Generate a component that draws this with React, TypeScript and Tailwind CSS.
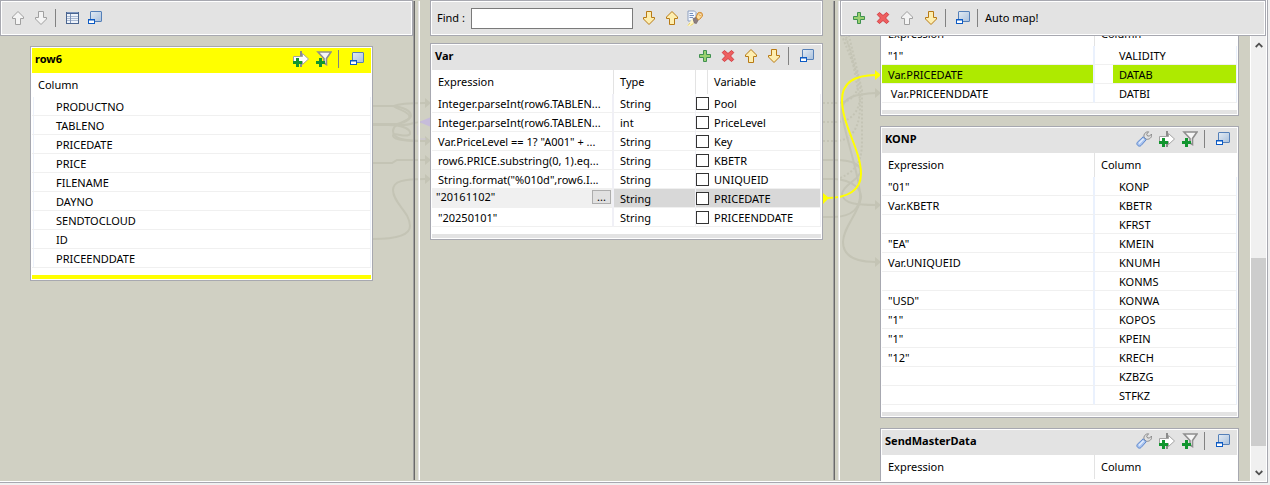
import React from 'react';

type IconProps = { tone?: 'gold' | 'gray' };

const ArrowUp = ({ tone = 'gold' }: IconProps) => (
  <svg viewBox="0 0 16 16" className="size-4" aria-hidden="true">
    <path
      d="M8 1.5 L13.5 7 V8.5 H10.5 V14.5 H5.5 V8.5 H2.5 V7 Z"
      fill={tone === 'gold' ? '#fdeeb0' : '#f4f4f4'}
      stroke={tone === 'gold' ? '#b87a14' : '#a0a0a0'}
      strokeLinejoin="round"
    />
  </svg>
);

const ArrowDown = ({ tone = 'gold' }: IconProps) => (
  <svg viewBox="0 0 16 16" className="size-4" aria-hidden="true">
    <path
      d="M8 14.5 L13.5 9 V7.5 H10.5 V1.5 H5.5 V7.5 H2.5 V9 Z"
      fill={tone === 'gold' ? '#fdeeb0' : '#f4f4f4'}
      stroke={tone === 'gold' ? '#b87a14' : '#a0a0a0'}
      strokeLinejoin="round"
    />
  </svg>
);

const TableIcon = () => (
  <svg viewBox="0 0 16 16" className="size-4" aria-hidden="true" shapeRendering="crispEdges">
    <rect x="2" y="2" width="13" height="12" fill="#4a6590" />
    <rect x="3" y="4" width="11" height="9" fill="#eef3fa" />
    <path d="M3 6.5H14M3 8.5H14M3 10.5H14" stroke="#a9b9d2" />
    <path d="M6.5 4V13" stroke="#7d93b8" />
    <path d="M3 2.5H14" stroke="#7f97bf" />
  </svg>
);

const RestoreIcon = () => (
  <svg viewBox="0 0 16 16" className="size-4" aria-hidden="true">
    <defs>
      <linearGradient id="pane" x1="0" y1="0" x2="1" y2="1">
        <stop offset="0" stopColor="#e4ecf4" />
        <stop offset="1" stopColor="#a9c0dc" />
      </linearGradient>
    </defs>
    <rect x="3.5" y="1.5" width="11" height="10" rx="0.5" fill="url(#pane)" stroke="#5580b8" />
    <rect x="1.5" y="9.5" width="6" height="4" fill="#fff" stroke="#0d5bc4" />
    <path d="M1 10H8" stroke="#0d5bc4" />
  </svg>
);

const PlusIcon = () => (
  <svg viewBox="0 0 16 16" className="size-4" aria-hidden="true">
    <path
      d="M6.5 2.5H9.5V6.5H13.5V9.5H9.5V13.5H6.5V9.5H2.5V6.5H6.5Z"
      fill="#9bd070"
      stroke="#3f9150"
      strokeLinejoin="round"
    />
  </svg>
);

const DeleteIcon = () => (
  <svg viewBox="0 0 16 16" className="size-4" aria-hidden="true">
    <path
      d="M4.5 2.5 L8 5.5 L11.5 2.5 L13.8 4.5 L10.5 8 L13.8 11.5 L11.5 13.5 L8 10.5 L4.5 13.5 L2.2 11.5 L5.5 8 L2.2 4.5Z"
      fill="#ee5f5f"
      stroke="#d33f45"
      strokeLinejoin="round"
    />
  </svg>
);

const InsertIcon = () => (
  <svg viewBox="0 0 16 16" className="size-4" aria-hidden="true">
    <path d="M8 0V16" stroke="#8c8c8c" strokeWidth="2" />
    <path d="M0.5 5.5H9.5V2.5L15.5 8L9.5 13.5V10.5H0.5Z" fill="#fff" stroke="#a3a3a3" />
    <path d="M3 7H6V10H9V13H6V16H3V13H0V10H3Z" fill="#12962f" />
  </svg>
);

const FilterIcon = () => (
  <svg viewBox="0 0 16 16" className="size-4" aria-hidden="true">
    <path d="M2 1H15L10.5 7.5V13.5L8 12V7.5Z" fill="#f6f6f6" stroke="#8f8f8f" strokeWidth="1.6" />
    <path d="M3 7H6V10H9V13H6V16H3V13H0V10H3Z" fill="#12962f" />
  </svg>
);

const WrenchIcon = () => (
  <svg viewBox="0 0 16 16" className="size-4" aria-hidden="true">
    <path
      d="M8 6.2C7.4 3.2 9.4 0.6 12.6 0.8L10.6 3.2L11.6 5L13.6 5L15.5 3C16.300 6.400 13.4 8.800 10.2 8.2Z"
      fill="#e2e2e2"
      stroke="#8a8a8a"
      strokeLinejoin="round"
    />
    <path
      d="M7.2 5.8L10.2 8.8L5 14.6C3.2 16.2 -0.2 14 1.2 11.4Z"
      fill="#a9c4f0"
      stroke="#5c86cc"
      strokeLinejoin="round"
    />
    <path d="M3 12.4L7.600 7.800" stroke="#e4eefc" strokeWidth="1.4" />
  </svg>
);

const HighlightIcon = () => (
  <svg viewBox="0 0 16 16" className="size-4" aria-hidden="true">
    <path d="M1 1H7.5L9 2.5V11H1Z" fill="#f4f8fe" stroke="#8497bb" strokeWidth="0.9" />
    <path d="M2.5 3.5H6M2.5 5.5H7M2.5 7.5H6" stroke="#6683b8" strokeWidth="0.9" />
    <path d="M5 9L8 12.5L4 16H0.5Z" fill="#fff7c8" />
    <path d="M1 15.5L3 13M3.500 15.500L6.500 13.5" stroke="#e8cf62" />
    <path d="M6 8.5L9 7.500L11.2 10L9.400 13.500L7.200 13Z" fill="#8d7f80" stroke="#6a5d62" strokeWidth="0.6" />
    <path
      d="M9 7L11 3C12.5 1.8 15.400 2.4 15.6 4.6C15.700 6.800 12.700 9.400 11.2 10Z"
      fill="#fbdc9a"
      stroke="#cf8426"
    />
    <circle cx="13.200" cy="4.6" r="1" fill="#fff" stroke="#cf8426" strokeWidth="0.6" />
  </svg>
);

const IconButton = ({ label, children }: { label: string; children: React.ReactNode }) => (
  <button type="button" aria-label={label} className="block size-4 shrink-0">
    {children}
  </button>
);

const Divider = () => <span className="h-[18px] w-px shrink-0 bg-[#828282]" />;

const Toolbar = ({ children, className = '' }: { children: React.ReactNode; className?: string }) => (
  <div className={`relative h-9 shrink-0 border border-[#a7a8b0] bg-white p-px ${className}`}>
    <div className="flex h-full items-center bg-[#e3e3e3]">{children}</div>
  </div>
);

const Sash = () => (
  <div className="relative flex pb-px pt-px">
    <span className="w-px bg-[#a0a0a0]" />
    <span className="w-px bg-[#696969]" />
    <span className="w-[3px]" />
    <span className="w-px bg-[#e3e3e3]" />
    <span className="w-px bg-white" />
  </div>
);

const Card = ({
  title,
  tools,
  active = false,
  className = '',
  children,
}: {
  title?: string;
  tools?: React.ReactNode;
  active?: boolean;
  className?: string;
  children: React.ReactNode;
}) => (
  <section className={`relative shrink-0 border border-[#a7a8b0] bg-white p-px ${className}`}>
    <header className={`flex h-[25px] items-start pl-[3px] pr-[6px] ${active ? 'bg-[#ffff00]' : 'bg-[#e3e3e3]'}`}>
      {title && <h2 className="flex-1 text-[11px] font-bold leading-[22px]">{title}</h2>}
      <div className="flex items-center pt-[2px]">{tools}</div>
    </header>
    {children}
    <div className={`mt-[7px] h-1 ${active ? 'bg-[#ffff00]' : 'bg-[#e3e3e3]'}`} />
  </section>
);

const TableTools = ({ settings = false }: { settings?: boolean }) => (
  <>
    <div className="mr-[6px] flex gap-[7px]">
      {settings && (
        <IconButton label="Settings">
          <WrenchIcon />
        </IconButton>
      )}
      <IconButton label="Add mapping">
        <InsertIcon />
      </IconButton>
      <IconButton label="Add filter">
        <FilterIcon />
      </IconButton>
    </div>
    <Divider />
    <div className="ml-[10px]">
      <IconButton label="Minimize">
        <RestoreIcon />
      </IconButton>
    </div>
  </>
);

const headCell = 'h-6 p-0 text-left font-normal';
const cellBox = 'h-[19px] border-b border-[#f0f0f0] p-0';
const cell = `${cellBox} overflow-hidden whitespace-pre`;
const cellText = 'h-[18px] pt-[2px] leading-4';

const inputColumns = [
  'PRODUCTNO',
  'TABLENO',
  'PRICEDATE',
  'PRICE',
  'FILENAME',
  'DAYNO',
  'SENDTOCLOUD',
  'ID',
  'PRICEENDDATE',
];

const InputTable = () => (
  <table className="w-full table-fixed border-separate border-spacing-0">
    <thead>
      <tr>
        <th className={`${headCell} pl-[6px]`}>Column</th>
      </tr>
    </thead>
    <tbody>
      {inputColumns.map((name) => (
        <tr key={name}>
          <td className={cell}>
            <div className={`${cellText} ml-px border-x border-[#edf2fb] pl-[22px]`}>{name}</div>
          </td>
        </tr>
      ))}
    </tbody>
  </table>
);

const variables = [
  { expression: 'Integer.parseInt(row6.TABLEN...', type: 'String', name: 'Pool' },
  { expression: 'Integer.parseInt(row6.TABLEN...', type: 'int', name: 'PriceLevel' },
  { expression: 'Var.PriceLevel == 1? "A001" + ...', type: 'String', name: 'Key' },
  { expression: 'row6.PRICE.substring(0, 1).eq...', type: 'String', name: 'KBETR' },
  { expression: 'String.format("%010d",row6.I...', type: 'String', name: 'UNIQUEID' },
  { expression: '"20161102"', type: 'String', name: 'PRICEDATE', selected: true },
  { expression: '"20250101"', type: 'String', name: 'PRICEENDDATE' },
];

const VarTable = () => (
  <table className="w-full table-fixed border-separate border-spacing-0">
    <colgroup>
      <col />
      <col className="w-[82px]" />
      <col className="w-[12px]" />
      <col className="w-[113px]" />
    </colgroup>
    <thead>
      <tr>
        <th className={`${headCell} border-r border-[#e3e3e3] pl-[6px]`}>Expression</th>
        <th className={`${headCell} border-r border-[#e3e3e3] pl-[6px]`}>Type</th>
        <th className={`${headCell} border-r border-[#e3e3e3]`} aria-label="Nullable" />
        <th className={`${headCell} pl-[6px]`}>Variable</th>
      </tr>
    </thead>
    <tbody>
      {variables.map((v) => (
        <tr key={v.name} className={v.selected ? 'bg-[#d8d8d8]' : ''}>
          {v.selected ? (
            <td className={`${cell} border-r-2 border-r-[#f0f0f6] bg-[#f0f0f0]`}>
              <div className="flex h-[18px] items-start pl-1 pr-px">
                <input
                  aria-label="PRICEDATE expression"
                  defaultValue={v.expression}
                  className="h-4 w-0 flex-1 bg-transparent p-0 leading-4 outline-none"
                />
                <button
                  type="button"
                  aria-label="Open expression editor"
                  className="mt-px h-[14px] w-[19px] border border-[#adadad] bg-[#e1e1e1] leading-[10px]"
                >
                  ...
                </button>
              </div>
            </td>
          ) : (
            <td className={`${cell} border-r-2 border-r-[#f0f0f6]`}>
              <div className={`${cellText} pl-[6px]`}>{v.expression}</div>
            </td>
          )}
          <td className={`${cell} border-r border-r-[#f0f0f6]`}>
            <div className={`${cellText} pl-[6px]`}>{v.type}</div>
          </td>
          <td className={cellBox}>
            <div className="h-[18px] pt-[3px]">
              <input
                type="checkbox"
                aria-label={`${v.name} nullable`}
                className="relative block size-[13px] appearance-none border border-[#333] bg-white checked:bg-[#333]"
              />
            </div>
          </td>
          <td className={`${cell} border-r border-r-[#f0f0f6]`}>
            <div className={`${cellText} pl-[6px]`}>{v.name}</div>
          </td>
        </tr>
      ))}
    </tbody>
  </table>
);

type OutputRow = { expression: string; column: string; linked?: boolean };

const validityRows: OutputRow[] = [
  { expression: '"1"', column: 'VALIDITY' },
  { expression: 'Var.PRICEDATE', column: 'DATAB', linked: true },
  { expression: ' Var.PRICEENDDATE', column: 'DATBI' },
];

const konpRows: OutputRow[] = [
  { expression: '"01"', column: 'KONP' },
  { expression: 'Var.KBETR', column: 'KBETR' },
  { expression: '', column: 'KFRST' },
  { expression: '"EA"', column: 'KMEIN' },
  { expression: 'Var.UNIQUEID', column: 'KNUMH' },
  { expression: '', column: 'KONMS' },
  { expression: '"USD"', column: 'KONWA' },
  { expression: '"1"', column: 'KOPOS' },
  { expression: '"1"', column: 'KPEIN' },
  { expression: '"12"', column: 'KRECH' },
  { expression: '', column: 'KZBZG' },
  { expression: '', column: 'STFKZ' },
];

const OutputTable = ({ rows }: { rows: OutputRow[] }) => (
  <table className="w-full table-fixed border-separate border-spacing-0">
    <colgroup>
      <col className="w-3/5" />
      <col />
    </colgroup>
    <thead>
      <tr>
        <th className={`${headCell} border-r border-[#e3e3e3] pl-[6px]`}>Expression</th>
        <th className={`${headCell} pl-[6px]`}>Column</th>
      </tr>
    </thead>
    <tbody>
      {rows.map((r) => (
        <tr key={r.column}>
          <td className={`${cell} border-r-2 border-r-[#eaf1fd]`}>
            <div className={`${cellText} pl-[6px] ${r.linked ? 'bg-[#aeea00]' : ''}`}>{r.expression}</div>
          </td>
          <td className={`${cell} border-r border-r-[#eaf1fd] pl-[18px]`}>
            <div className={`${cellText} pl-[6px] ${r.linked ? 'bg-[#aeea00]' : ''}`}>{r.column}</div>
          </td>
        </tr>
      ))}
    </tbody>
  </table>
);

const Connectors = () => (
  <svg
    className="pointer-events-none absolute left-0 top-0 h-[481px] w-full"
    viewBox="0 0 1266 481"
    preserveAspectRatio="none"
    aria-hidden="true"
  >
    <g fill="none" stroke="#c4c4b5" strokeWidth="2">
      <path d="M373 106H392C404 107 411 111 411 116C410 122 393 122 393 131C393 139 404 141 425 141" />
      <path d="M373 124H392C406 124 411 119 409 115C405 110 394 108 394 106C398 104 410 103 425 103" />
      <path d="M373 125H400C416 125 408 122 425 122" />
      <path d="M373 125H388C405 125 411 130 410 134C407 139 393 131 393 136C394 140 406 141 425 141" />
      <path d="M373 163H392L397 160H425" />
      <path d="M373 239C400 239 410 234 410 226C410 212 393 203 393 190C393 181 404 179 425 179" />
      <path d="M823 160H835C855 160 862 166 860 173C857 181 843 185 842 194C843 204 858 205 876 205" />
      <path d="M823 179H835C852 180 862 189 861 198C858 214 843 228 843 242C843 257 856 262 876 262" />
      <path d="M823 217H833C852 217 861 208 860 193C857 165 842 128 842 110C842 97 856 94 876 93" />
    </g>
    <g fill="none" stroke="#c4c4b5" strokeWidth="2" strokeDasharray="2 2">
      <path d="M823 103H835C856 103 860 88 858 76L842 36" />
      <path d="M823 122H835C856 122 862 105 860 86L846 36" />
      <path d="M823 141H835C856 141 861 120 860 100L850 48L844 36" />
      <path d="M840 178C858 170 862 160 862 140V90L849 36" />
    </g>
    <g fill="#c4c4b5">
      <path d="M425 98L431 103L425 108Z" />
      <path d="M425 136L431 141L425 146Z" />
      <path d="M425 155L431 160L425 165Z" />
      <path d="M425 174L431 179L425 184Z" />
      <path d="M875 88L881 93L875 98Z" />
      <path d="M875 200L881 205L875 210Z" />
      <path d="M875 257L881 262L875 267Z" />
    </g>
    <path d="M431 117V127L419 122Z" fill="#c6bcda" />
    <path d="M418 126V135M420 139H426" stroke="#c9c2d2" fill="none" />
    <path
      d="M827 198C848 198 861 190 861 174C861 150 842 125 842 100C842 82 856 75 876 75"
      fill="none"
      stroke="#ffff00"
      strokeWidth="2"
    />
    <path d="M823 193L829 198L823 204Z" fill="#ffff00" />
    <path d="M875 70L881 75L875 80Z" fill="#ffff00" />
  </svg>
);

const ScrollBar = () => (
  <div className="flex w-4 shrink-0 flex-col border-l border-white bg-[#f0f0f0]">
    <button type="button" aria-label="Scroll up" className="flex h-[17px] items-center justify-center">
      <svg viewBox="0 0 8 6" className="h-[6px] w-2" aria-hidden="true">
        <path d="M0.7 5L4 1.700L7.3 5" fill="none" stroke="#505050" strokeWidth="1.8" />
      </svg>
    </button>
    <div className="flex flex-1 flex-col">
      <div className="flex-[205]" />
      <div className="flex-[188] bg-[#cdcdcd]" />
      <div className="flex-[18]" />
    </div>
    <button type="button" aria-label="Scroll down" className="flex h-[17px] items-center justify-center">
      <svg viewBox="0 0 8 6" className="h-[6px] w-2" aria-hidden="true">
        <path d="M0.7 1L4 4.300L7.3 1" fill="none" stroke="#505050" strokeWidth="1.8" />
      </svg>
    </button>
  </div>
);

export default function App() {
  return (
    <main className="flex h-screen flex-col bg-[#f0f0f0] pb-[2px] pr-[2px] font-['Noto_Sans','Open_Sans',sans-serif] text-[11px] text-black">
      <div className="flex min-h-0 flex-1 flex-col border-b border-r border-[#a7a8b0] bg-white pb-px pr-px">
        <div className="relative grid min-h-0 flex-1 grid-cols-[413fr_7px_413fr_7px_426fr] grid-rows-[minmax(0,1fr)] overflow-hidden bg-[#d0d0c3]">
          <Connectors />

          <div className="relative flex min-w-0 flex-col">
            <Toolbar>
              <div className="flex items-center pl-2">
                <div className="mr-[6px] flex gap-[7px]">
                  <IconButton label="Move up">
                    <ArrowUp tone="gray" />
                  </IconButton>
                  <IconButton label="Move down">
                    <ArrowDown tone="gray" />
                  </IconButton>
                </div>
                <Divider />
                <div className="ml-2 flex gap-[7px]">
                  <IconButton label="Table view">
                    <TableIcon />
                  </IconButton>
                  <IconButton label="Minimize">
                    <RestoreIcon />
                  </IconButton>
                </div>
              </div>
            </Toolbar>
            <Card title="row6" active tools={<TableTools />} className="ml-[30px] mr-10 mt-[10px]">
              <InputTable />
            </Card>
          </div>

          <Sash />

          <div className="relative flex min-w-0 flex-col px-[10px]">
            <Toolbar>
              <label htmlFor="find" className="box-content w-[34px] whitespace-nowrap pl-[5px]">
                Find :
              </label>
              <input
                id="find"
                type="text"
                className="h-[21px] w-[162px] border border-[#7a7a7a] bg-white px-1 outline-none"
              />
              <div className="ml-2 flex gap-[7px]">
                <IconButton label="Find next">
                  <ArrowDown />
                </IconButton>
                <IconButton label="Find previous">
                  <ArrowUp />
                </IconButton>
                <IconButton label="Highlight all">
                  <HighlightIcon />
                </IconButton>
              </div>
            </Toolbar>
            <Card
              title="Var"
              className="mt-[7px]"
              tools={
                <>
                  <div className="mr-[6px] flex gap-[7px]">
                    <IconButton label="Add variable">
                      <PlusIcon />
                    </IconButton>
                    <IconButton label="Remove variable">
                      <DeleteIcon />
                    </IconButton>
                    <IconButton label="Move up">
                      <ArrowUp />
                    </IconButton>
                    <IconButton label="Move down">
                      <ArrowDown />
                    </IconButton>
                  </div>
                  <Divider />
                  <div className="ml-[10px]">
                    <IconButton label="Minimize">
                      <RestoreIcon />
                    </IconButton>
                  </div>
                </>
              }
            >
              <VarTable />
            </Card>
          </div>

          <Sash />

          <div className="relative flex min-w-0 flex-col">
            <Toolbar className="z-10">
              <div className="flex items-center pl-[9px]">
                <div className="mr-[6px] flex gap-2">
                  <IconButton label="Add output">
                    <PlusIcon />
                  </IconButton>
                  <IconButton label="Remove output">
                    <DeleteIcon />
                  </IconButton>
                  <IconButton label="Move up">
                    <ArrowUp tone="gray" />
                  </IconButton>
                  <IconButton label="Move down">
                    <ArrowDown />
                  </IconButton>
                </div>
                <Divider />
                <div className="ml-[9px] mr-[6px]">
                  <IconButton label="Minimize">
                    <RestoreIcon />
                  </IconButton>
                </div>
                <Divider />
                <button type="button" className="ml-[7px]">
                  Auto map!
                </button>
              </div>
            </Toolbar>
            <div className="flex min-h-0 flex-1">
              <div className="flex min-w-0 flex-1 flex-col gap-[10px] overflow-hidden pl-10 pr-[11px]">
                <Card className="-mt-[41px]">
                  <OutputTable rows={validityRows} />
                </Card>
                <Card title="KONP" tools={<TableTools settings />}>
                  <OutputTable rows={konpRows} />
                </Card>
                <Card title="SendMasterData" tools={<TableTools settings />}>
                  <OutputTable rows={[]} />
                </Card>
              </div>
              <ScrollBar />
            </div>
          </div>
        </div>
      </div>
    </main>
  );
}
